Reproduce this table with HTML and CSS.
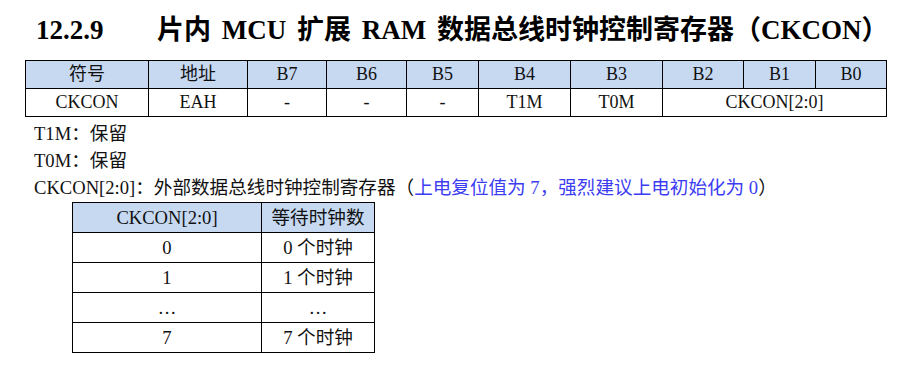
FILE: index.html
```html
<!DOCTYPE html>
<html>
<head>
<meta charset="utf-8">
<link rel="stylesheet" href="styles.css">
</head>
<body>
<div class="page">
  <h1 class="title"><span class="num">12.2.9</span><span>片内 <span class="lat">MCU</span> 扩展 <span class="lat">RAM</span> 数据总线时钟控制寄存器（<span class="lat">CKCON</span>）</span></h1>
  <table class="reg">
    <colgroup>
      <col class="c1"><col class="c2"><col class="c3"><col class="c4"><col class="c5">
      <col class="c6"><col class="c7"><col class="c8"><col class="c9"><col class="c10">
    </colgroup>
    <tr class="head">
      <td>符号</td><td>地址</td><td>B7</td><td>B6</td><td>B5</td><td>B4</td><td>B3</td><td>B2</td><td>B1</td><td>B0</td>
    </tr>
    <tr>
      <td>CKCON</td><td>EAH</td><td>-</td><td>-</td><td>-</td><td>T1M</td><td>T0M</td><td colspan="3">CKCON[2:0]</td>
    </tr>
  </table>
  <p class="line">T1M：保留</p>
  <p class="line">T0M：保留</p>
  <p class="line">CKCON[2:0]：外部数据总线时钟控制寄存器（<span class="blue">上电复位值为 <span class="lat">7</span>，强烈建议上电初始化为 <span class="lat">0</span></span>）</p>
  <table class="sub">
    <colgroup><col class="s1"><col class="s2"></colgroup>
    <tr class="head"><td>CKCON[2:0]</td><td>等待时钟数</td></tr>
    <tr><td>0</td><td><span class="lat">0</span> 个时钟</td></tr>
    <tr><td>1</td><td><span class="lat">1</span> 个时钟</td></tr>
    <tr><td>…</td><td>…</td></tr>
    <tr><td>7</td><td><span class="lat">7</span> 个时钟</td></tr>
  </table>
</div>
</body>
</html>
```
FILE: styles.css
```css
html, body {
  margin: 0;
  padding: 0;
  background: #fff;
}
body {
  font-family: "Liberation Serif", "Noto Sans CJK SC", serif;
  color: #111;
}
.lat {
  font-family: "Liberation Serif", serif;
}
.page {
  padding: 12px 0 0 25px;
}
.title {
  margin: 0 0 0 11px;
  font-size: 27px;
  font-weight: bold;
  line-height: 36px;
  height: 36px;
  color: #000;
  white-space: nowrap;
  word-spacing: 4px;
}
.title .num {
  display: inline-block;
  width: 121px;
}
.reg, .sub {
  border-collapse: collapse;
  table-layout: fixed;
}
.reg {
  margin-top: 12px;
  width: 862px;
  font-size: 18px;
}
.reg td, .sub td {
  border: 1px solid #000;
  text-align: center;
  padding: 0;
  white-space: nowrap;
}
.reg td { height: 27px; line-height: 27px; }
.head td { background: #c6d9f1; }
.c1 { width: 123px; }
.c2 { width: 99px; }
.c3 { width: 79px; }
.c4 { width: 80px; }
.c5 { width: 72px; }
.c6 { width: 92px; }
.c7 { width: 92px; }
.c8 { width: 81px; }
.c9 { width: 72px; }
.c10 { width: 71px; }
.line {
  margin: 0 0 0 9px;
  font-size: 18.6px;
  line-height: 27px;
}
.line:first-of-type { margin-top: 3px; }
.blue { color: #3c3cf2; }
.sub {
  margin: 1px 0 0 47px;
  width: 303px;
  font-size: 18.6px;
}
.sub td { height: 29px; line-height: 29px; }
.s1 { width: 189px; }
.s2 { width: 113px; }
```
